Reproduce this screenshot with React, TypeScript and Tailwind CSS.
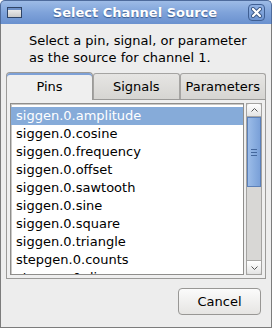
import React from "react";

const ROWS = [
  "siggen.0.amplitude",
  "siggen.0.cosine",
  "siggen.0.frequency",
  "siggen.0.offset",
  "siggen.0.sawtooth",
  "siggen.0.sine",
  "siggen.0.square",
  "siggen.0.triangle",
  "stepgen.0.counts",
  "stepgen.0.dir",
];

const FONT = { fontFamily: '"DejaVu Sans", Verdana, sans-serif' };

// --- Titelleiste ---
const TitleBar = () => (
  <div className="h-[24px] shrink-0 flex items-center rounded-t-[5px] border border-b-0 border-[#4e6b9c] bg-gradient-to-b from-[#9dbbe6] via-[#7fa3da] to-[#6a91cf] px-[6px]">
    {/* Fenster-Icon */}
    <div className="w-[15px] h-[11px] border border-[#2f4466] bg-gradient-to-b from-[#f4f4f4] to-[#c9c9c9] shadow-[inset_0_2px_0_#6c8fc7]" />
    <div className="flex-1 text-center text-white font-bold text-[13px] leading-none [text-shadow:0_1px_1px_#3a5a8c]">
      Select Channel Source
    </div>
    {/* Schließen-Knopf */}
    <div className="w-[17px] h-[17px] rounded-[4px] border border-[#3f5f93] bg-gradient-to-b from-[#8fb0e2] to-[#6e95d2] flex items-center justify-center">
      <svg width="11" height="11" viewBox="0 0 11 11">
        <path d="M2 2 L9 9 M9 2 L2 9" stroke="#3a5784" strokeWidth="4" strokeLinecap="round" />
        <path d="M2 2 L9 9 M9 2 L2 9" stroke="#ffffff" strokeWidth="2.2" strokeLinecap="round" />
      </svg>
    </div>
  </div>
);

const Tab = ({ label, active }: { label: string; active?: boolean }) =>
  active ? (
    <div className="w-[87px] h-[28px] -mb-px relative z-10 flex items-center justify-center rounded-t-[4px] border border-b-0 border-[#9b9a98] bg-[#efefef] shadow-[inset_0_2px_0_#7da0d6] text-[13px] text-black">
      {label}
    </div>
  ) : (
    <div className="flex-1 h-[26px] flex items-center justify-center rounded-t-[3px] border border-b-0 border-[#a5a4a2] bg-gradient-to-b from-[#e6e5e3] to-[#d6d5d2] text-[13px] text-black">
      {label}
    </div>
  );

// --- Scrollbalken ---
const ScrollBar = () => (
  <div className="w-[16px] flex flex-col border border-[#a4a3a1] bg-[#d8d7d5]">
    <div className="h-[13px] shrink-0 flex items-center justify-center rounded-t-[3px] border-b border-[#a9a8a6] bg-gradient-to-b from-[#ffffff] to-[#e4e4e4]">
      <svg width="7" height="4" viewBox="0 0 7 4">
        <path d="M0.5 3.5 L3.5 0.5 L6.5 3.5" stroke="#555" fill="none" strokeWidth="1" />
      </svg>
    </div>
    <div className="h-[70px] shrink-0 flex flex-col items-center justify-center gap-[2px] border border-[#5c80b8] bg-gradient-to-r from-[#9cbce8] via-[#8aaee0] to-[#7aa0d8]">
      <div className="w-[6px] h-px bg-[#44679c]" />
      <div className="w-[6px] h-px bg-[#44679c]" />
      <div className="w-[6px] h-px bg-[#44679c]" />
    </div>
    <div className="flex-1" />
    <div className="h-[14px] shrink-0 flex items-center justify-center rounded-b-[3px] border-t border-[#a9a8a6] bg-gradient-to-b from-[#ffffff] to-[#e4e4e4]">
      <svg width="7" height="4" viewBox="0 0 7 4">
        <path d="M0.5 0.5 L3.5 3.5 L6.5 0.5" stroke="#555" fill="none" strokeWidth="1" />
      </svg>
    </div>
  </div>
);

export default function App() {
  return (
    <div className="w-[272px] h-[328px] flex flex-col bg-white" style={FONT}>
      <TitleBar />
      <div className="flex-1 flex flex-col bg-[#ededed] border-x border-b border-[#7c7c7c]">
        <div className="pt-[8px] pl-[28px] text-[13px] leading-[17px] text-black">
          <div>Select a pin, signal, or parameter</div>
          <div>as the source for channel 1.</div>
        </div>

        {/* Notebook */}
        <div className="mt-[6px] mx-[5px] flex flex-col">
          <div className="flex items-end">
            <Tab label="Pins" active />
            <Tab label="Signals" />
            <Tab label="Parameters" />
          </div>
          <div className="h-[180px] flex gap-[2px] border border-[#9b9a98] bg-[#efefef] p-[3px]">
            <div className="flex-1 overflow-hidden border border-[#8f8e8c] shadow-[inset_1px_1px_0_#c9c8c6] bg-white pt-[3px]">
              {ROWS.map((r, i) => (
                <div
                  key={r}
                  className={`h-[18px] pl-[5px] text-[13px] leading-[18px] whitespace-nowrap ${
                    i === 0 ? "bg-[#86abd9] text-white" : "text-black"
                  }`}
                >
                  {r}
                </div>
              ))}
            </div>
            <ScrollBar />
          </div>
        </div>

        <div className="flex justify-end mt-[9px] pr-[10px]">
          <div className="w-[83px] h-[27px] flex items-center justify-center rounded-[4px] border border-[#989795] bg-gradient-to-b from-[#fbfbfb] to-[#e6e5e3] text-[13px] text-black">
            Cancel
          </div>
        </div>
      </div>
    </div>
  );
}
